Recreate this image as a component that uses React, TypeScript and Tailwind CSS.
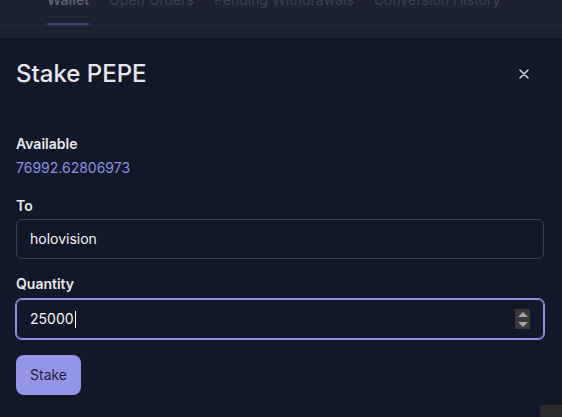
const tabs = ["Wallet", "Open Orders", "Pending Withdrawals", "Conversion History"];

export default function App() {
  return (
    <div
      className="relative h-[417px] w-full overflow-hidden bg-[#111827]"
      style={{ fontFamily: "Inter, 'Noto Sans', sans-serif" }}
    >
      {/* dimmed page behind the dialog */}
      <div className="h-[38px] overflow-hidden bg-[#1c2230]">
        <nav className="-mt-[10px] flex gap-5 border-b border-[#222938] pl-[47px]">
          {tabs.map((t, i) => (
            <span
              key={t}
              className={
                i === 0
                  ? "border-b-2 border-[#3d4470] pb-[13px] text-sm font-semibold leading-5 text-[#596070]"
                  : "border-b-2 border-transparent pb-[13px] text-sm leading-5 text-[#3a4251]"
              }
            >
              {t}
            </span>
          ))}
        </nav>
      </div>

      {/* dialog */}
      <div className="pl-4 pr-[18px] pt-5">
        <div className="flex h-8 items-center justify-between">
          <h2 className="text-2xl font-medium text-[#e5e7eb]">Stake PEPE</h2>
          <button className="mr-[15px] text-[#d1d5db]">
            <svg width="10" height="10" viewBox="0 0 10 10" fill="none" stroke="currentColor" strokeWidth="1.6" strokeLinecap="round">
              <path d="M1 1l8 8M9 1L1 9" />
            </svg>
          </button>
        </div>

        <div className="mt-[44px]">
          <div className="text-sm font-semibold leading-5 text-[#e5e7eb]">Available</div>
          <div className="mt-1 text-sm leading-5 text-[#8b8fe8]">76992.62806973</div>
        </div>

        <div className="mt-[18px]">
          <div className="text-sm font-semibold leading-5 text-[#e5e7eb]">To</div>
          <div className="mt-[3px] flex h-10 items-center rounded-md border border-[#374151] px-[13px] text-sm text-[#f3f4f6]">
            holovision
          </div>
        </div>

        <div className="mt-[15px]">
          <div className="text-sm font-semibold leading-5 text-[#e5e7eb]">Quantity</div>
          <div className="mt-[5px] flex h-10 items-center justify-between rounded-md border border-[#8b8ff0] pl-[13px] pr-[13px] text-sm text-[#f3f4f6] ring-1 ring-[#8b8ff0]">
            <div className="flex items-center">
              25000
              <span className="ml-px h-[17px] w-px bg-white" />
            </div>
            <div className="flex h-5 w-[15px] flex-col items-center justify-center gap-[5px] bg-[#393939]">
              <span className="h-0 w-0 border-x-[5px] border-b-[5px] border-x-transparent border-b-[#a3a3a3]" />
              <span className="h-0 w-0 border-x-[5px] border-t-[5px] border-x-transparent border-t-[#a3a3a3]" />
            </div>
          </div>
        </div>

        <button className="mt-4 h-10 rounded-lg bg-[#9495e9] px-[14px] text-sm text-[#1f2433]">
          Stake
        </button>
      </div>

      <div className="absolute bottom-0 right-0 h-3 w-[22px] bg-[#2b2b2b]" />
    </div>
  );
}
